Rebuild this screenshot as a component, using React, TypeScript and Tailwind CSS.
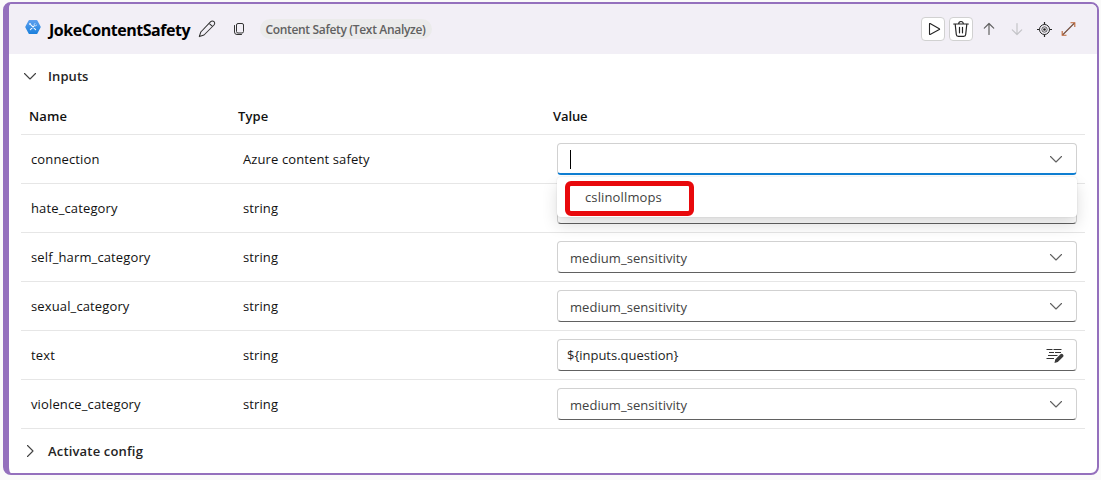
import React from 'react';

const ChevronDown = ({ className = '' }: { className?: string }) => (
  <svg className={className} width="14" height="10" viewBox="0 0 14 10" fill="none" stroke="currentColor" strokeWidth="1.1" strokeLinecap="round" strokeLinejoin="round">
    <path d="M1.500 2.500l5.500 5.500L12.500 2.500" />
  </svg>
);

const ToolLogo = () => (
  <svg width="16" height="16" viewBox="0 0 16 16">
    <defs>
      <linearGradient id="hex" x1="0" y1="0" x2="0" y2="1">
        <stop offset="0" stopColor="#5ea0ef" />
        <stop offset="1" stopColor="#1b80dc" />
      </linearGradient>
    </defs>
    <path d="M4.400 1h7.200q.5 0 .8.5l3.200 5.900q.3.6 0 1.200l-3.200 5.900q-.3.5-.8.5H4.400q-.5 0-.8-.5L.4 8.600q-.3-.6 0-1.200l3.200-5.900q.3-.5.8-.5z" fill="url(#hex)" />
    <path d="M5.400 5.400l5.200 5.200M9.200 6.800l-3.800 3.800" stroke="#f2f8ff" strokeWidth="1.100" strokeLinecap="round" />
    <circle cx="5" cy="5.100" r="1" fill="#e3effc" />
    <path d="M10.200 4.200l-1 1.200.3 1.200 1.300.2 1.100-1" stroke="#d6e8fb" strokeWidth=".9" fill="none" />
  </svg>
);

const Pencil = () => (
  <svg width="18" height="18" viewBox="0 0 18 18" fill="none" stroke="#333" strokeWidth="1.050" strokeLinejoin="round">
    <path d="M12.700 1.700a2.250 2.250 0 0 1 3.300 3.300L6 15l-4.700 1.600L2.800 12zM11.200 3.300l3.400 3.400" />
  </svg>
);

const Copy = () => (
  <svg width="12" height="14" viewBox="0 0 12 14" fill="none" stroke="#333" strokeWidth="1">
    <rect x="3.500" y="1.500" width="7" height="9.500" rx="1.500" />
    <path d="M1.500 3.500v6.500a2.500 2.500 0 0 0 2.500 2.500h4.500" strokeLinecap="round" />
  </svg>
);

const Play = () => (
  <svg className="ml-px" width="14" height="14" viewBox="0 0 14 14" fill="none" stroke="#242424" strokeWidth="1.100" strokeLinejoin="round">
    <path d="M2.500 1.900v10.200q0 .6.6.3l9.200-4.800q.6-.4 0-.8L3.100 1.600q-.6-.3-.6.3z" />
  </svg>
);

const Trash = () => (
  <svg width="18" height="18" viewBox="0 0 18 18" fill="none" stroke="#242424" strokeWidth="1.200" strokeLinecap="round">
    <path d="M1.700 4h14.600M6.700 3.800a2.300 2.300 0 0 1 4.600 0M3.200 4.200l1.100 10.300a2 2 0 0 0 2 1.900h5.400a2 2 0 0 0 2-1.900l1.100-10.300M7.500 7.300v5.500M10.500 7.300v5.500" />
  </svg>
);

const Arrow = ({ down = false }: { down?: boolean }) => (
  <svg className={down ? 'rotate-180 text-[#c4c4c8]' : 'text-[#616161]'} width="14" height="14" viewBox="0 0 14 14" fill="none" stroke="currentColor" strokeWidth="1.200" strokeLinecap="round" strokeLinejoin="round">
    <path d="M7 12.500v-11M2.300 6.200L7 1.500l4.700 4.700" />
  </svg>
);

const Locate = () => (
  <svg width="16" height="16" viewBox="0 0 16 16" fill="none" stroke="#242424" strokeWidth="1.200">
    <circle cx="7.500" cy="8.500" r="5" strokeWidth="1" />
    <circle cx="7.500" cy="8.500" r="2.700" strokeWidth=".7" />
    <circle cx="7.500" cy="8.500" r="1.300" fill="#242424" stroke="none" />
    <path d="M7.500 1v2.500M7.500 13.500v2.500M0 8.500h2.500M12.500 8.500h2.500" />
  </svg>
);

const Expand = () => (
  <svg width="16" height="16" viewBox="0 0 16 16" fill="none" strokeWidth="1.100">
    <path d="M1.500 14L13.500 2" stroke="#704a39" />
    <path d="M9.500 1.700h4.300v4.300" stroke="#bd6434" />
    <path d="M1.200 10v4.300h4.300" stroke="#bd6434" />
  </svg>
);

const EditLines = () => (
  <svg width="18" height="18" viewBox="0 0 18 18" fill="none">
    <path d="M.5 3.500h6M7.500 3.500h8M3 6.500h5M9 6.500h6M2 9.500h9.500M.5 12.500h7.500" stroke="#333" strokeWidth="1.100" />
    <path d="M8.500 17l.7-3.500 5-5.100a1.800 1.800 0 0 1 2.700 2.500l-5.100 5.200z" fill="#3b3b3b" />
  </svg>
);

const Select = ({ value }: { value: string }) => (
  <div className="flex h-8 w-[520px] items-center justify-between rounded-[4px] border border-[#d1d1d1] border-b-[#616161] bg-white pl-3 pr-[13px] text-[#424242]">
    <span className="pt-0.5 tracking-[0.060px]">{value}</span>
    <ChevronDown className="text-[#616161]" />
  </div>
);

const Connection = () => (
  <div className="relative z-10 h-8 w-[520px]">
    <div className="flex h-8 items-center justify-between rounded-[4px] border border-b-2 border-[#d1d1d1] border-b-[#0f7fd3] bg-white pl-3 pr-[13px]">
      <span className="mt-px h-[19px] w-px bg-black" />
      <ChevronDown className="text-[#616161]" />
    </div>
    <div className="absolute left-0 top-[34px] flex h-10 w-[520px] items-end rounded-[4px] bg-white pb-px pl-2 shadow-[0_8px_16px_rgba(0,0,0,0.14),0_0_2px_rgba(0,0,0,0.12)]">
      <div className="flex h-[35px] w-[129px] items-center rounded-[6px] border-[5px] border-[#e8090c] pb-[3px] pl-[15px] text-[#424242]">
        <span className="tracking-[0.130px]">cslinollmops</span>
      </div>
    </div>
  </div>
);

const Expression = () => (
  <div className="flex h-8 w-[520px] items-center justify-between rounded-[4px] border border-[#d1d1d1] border-b-[#616161] bg-white pl-[9px] pr-[12px] text-[#242424]">
    <span className="tracking-[-0.020px]">{'${inputs.question}'}</span>
    <EditLines />
  </div>
);

const rows = [
  { name: 'connection', type: 'Azure content safety', control: <Connection /> },
  { name: 'hate_category', type: 'string', control: <Select value="" /> },
  { name: 'self_harm_category', type: 'string', control: <Select value="medium_sensitivity" /> },
  { name: 'sexual_category', type: 'string', control: <Select value="medium_sensitivity" /> },
  { name: 'text', type: 'string', control: <Expression /> },
  { name: 'violence_category', type: 'string', control: <Select value="medium_sensitivity" /> },
];

export default function App() {
  return (
    <div className="h-[480px] w-[1101px] bg-[#fafafa] pl-[3px] pt-[2px] font-['Open_Sans',sans-serif] text-[13px] leading-5 text-[#111]">
      <div className="h-[473px] w-[1096px] overflow-hidden rounded-[8px] border-2 border-l-[6px] border-[#9470bd] bg-white">
        <header className="flex h-[50px] items-center bg-[#f2eff6]">
          <div className="mb-1 ml-4"><ToolLogo /></div>
          <h1 className="ml-2 w-[150px] whitespace-nowrap pt-px text-[16px] font-bold tracking-[-0.480px] text-black">JokeContentSafety</h1>
          <div className="-ml-px"><Pencil /></div>
          <div className="ml-[17px]"><Copy /></div>
          <div className="ml-[15px] flex h-5 w-[172px] items-center justify-center whitespace-nowrap rounded-full bg-[#ebebeb] pr-px pt-px text-[12px] font-semibold tracking-[-0.330px] text-[#616161]">
            Content Safety (Text Analyze)
          </div>
          <div className="ml-auto mr-5 flex items-center">
            <button className="flex h-6 w-6 items-center justify-center rounded-[4px] border border-[#d1d1d1] bg-white"><Play /></button>
            <button className="ml-1 flex h-6 w-6 items-center justify-center rounded-[4px] border border-[#d1d1d1] bg-white"><Trash /></button>
            <div className="ml-[9px]"><Arrow /></div>
            <div className="ml-[14px]"><Arrow down /></div>
            <div className="ml-[13px]"><Locate /></div>
            <div className="ml-[8px]"><Expand /></div>
          </div>
        </header>
        <div className="flex h-11 items-center pl-[14px] text-[#242424]">
          <ChevronDown className="text-[#424242]" />
          <span className="ml-[11px] font-semibold tracking-[0.080px]">Inputs</span>
        </div>
        <div className="ml-3 w-[1064px]">
          <div className="grid h-[37px] grid-cols-[209px_315px_1fr] items-center border-b border-[#e6e6e6] pl-2 font-semibold tracking-[0.100px]">
            <span>Name</span>
            <span>Type</span>
            <span className="tracking-[-0.100px]">Value</span>
          </div>
          {rows.map((row) => (
            <div key={row.name} className="grid h-[49px] grid-cols-[212px_314px_1fr] items-center border-b border-[#e6e6e6] pl-[10px]">
              <span className="tracking-[0.130px]">{row.name}</span>
              <span className="tracking-[0.110px]">{row.type}</span>
              {row.control}
            </div>
          ))}
        </div>
        <div className="flex h-[44px] items-center pl-[14px] text-[#242424]">
          <ChevronDown className="-rotate-90 text-[#424242]" />
          <span className="ml-[11px] font-semibold tracking-[0.170px]">Activate config</span>
        </div>
      </div>
    </div>
  );
}
